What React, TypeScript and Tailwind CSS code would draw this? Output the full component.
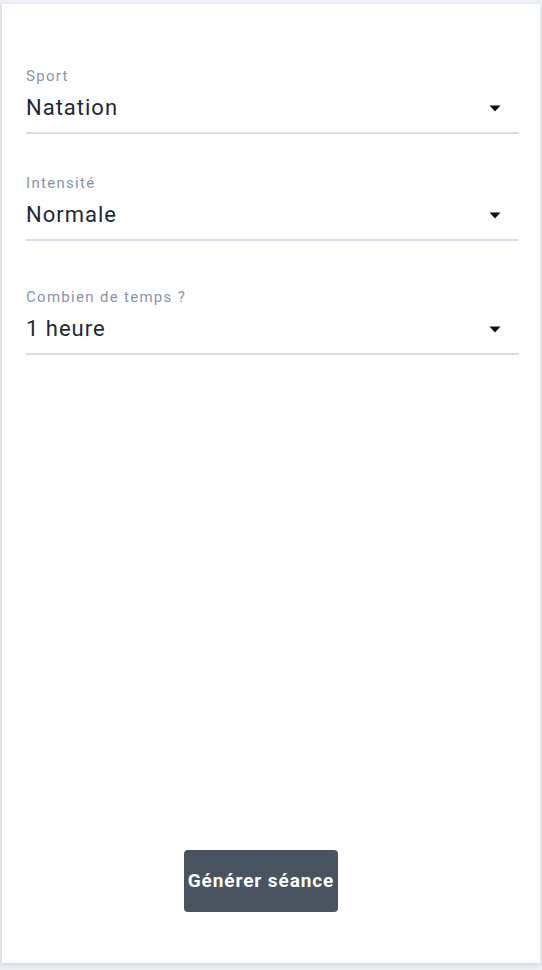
const fields = [
  { label: "Sport", value: "Natation", mt: "mt-0" },
  { label: "Intensité", value: "Normale", mt: "mt-[39px]" },
  { label: "Combien de temps ?", value: "1 heure", mt: "mt-[46px]" },
];

const Caret = () => (
  <svg width="12" height="7" viewBox="0 0 12 7" className="shrink-0">
    <path d="M0.5 0.5 L11.5 0.5 L6 6.5 Z" fill="#111" />
  </svg>
);

export default function App() {
  return (
    <div
      className="min-h-screen bg-[#edf0f5] pt-1 pl-px pr-0.5 pb-[7px]"
      style={{ fontFamily: "Roboto, 'Liberation Sans', sans-serif" }}
    >
      <div className="h-[959px] bg-white border-l border-[#dde3ec] shadow-[0_2px_5px_rgba(170,180,200,0.45)] flex flex-col pt-[62px] pl-6 pr-[21px] pb-[51px]">
        {fields.map((f) => (
          <div key={f.label} className={`${f.mt} border-b-2 border-[#d6dee8] pb-2.5`}>
            <div className="text-[15px] leading-5 tracking-[1.3px] text-[#8796aa]">{f.label}</div>
            <div className="mt-2 flex items-center justify-between pr-[18px]">
              <span className="text-[22px] leading-7 tracking-[1px] text-[#1e2835]">{f.value}</span>
              <Caret />
            </div>
          </div>
        ))}
        <div className="flex-1" />
        <button className="self-start ml-[158px] h-[62px] w-[154px] rounded-sm bg-[#4a5360] text-white font-bold text-[19px] tracking-[0.9px] whitespace-nowrap">
          Générer séance
        </button>
      </div>
    </div>
  );
}
